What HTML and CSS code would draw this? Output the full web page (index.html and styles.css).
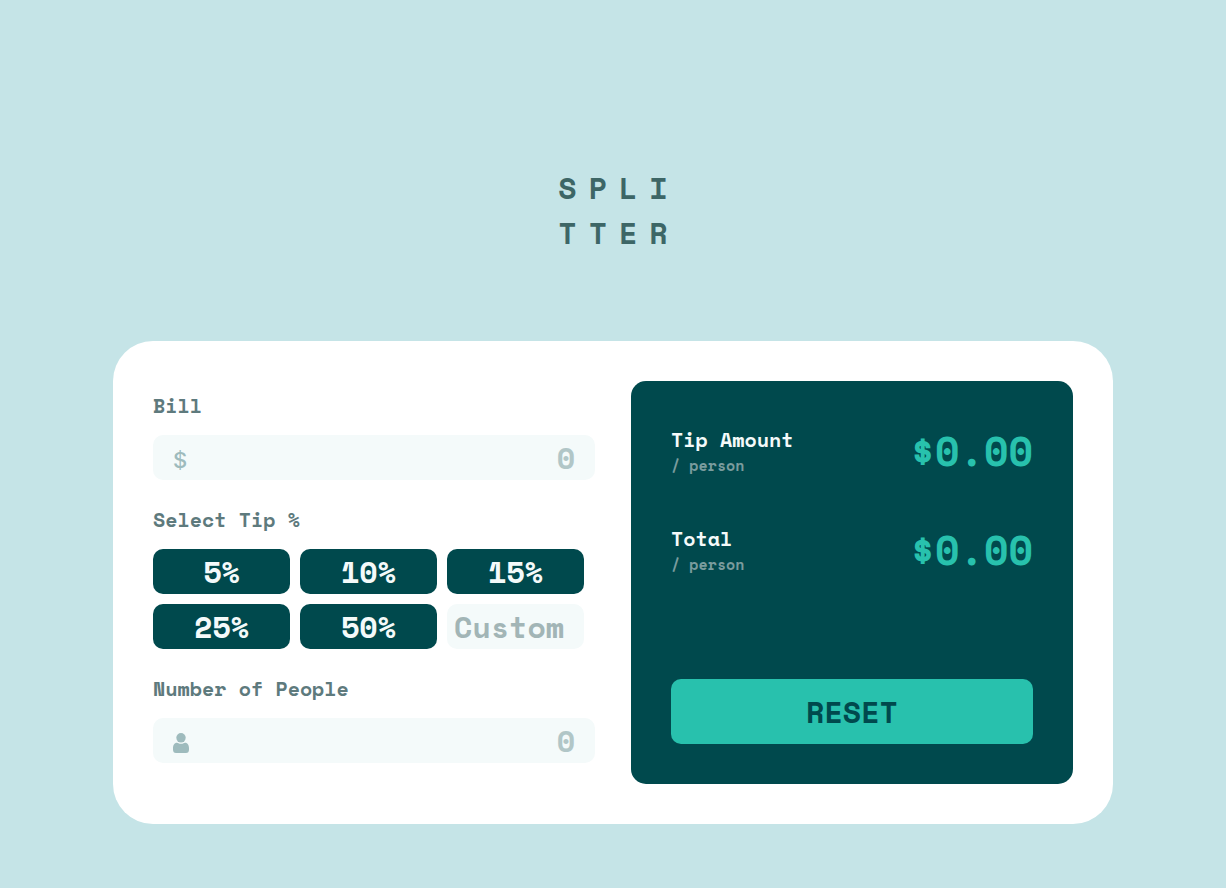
FILE: index.html
```html
<!DOCTYPE html>
<html lang="en">
<head>
  <meta charset="utf-8">
  <meta name="viewport" content="width=device-width, initial-scale=1">
  <title>Splitter</title>
  <link rel="stylesheet" href="styles.css">
</head>
<body>
  <h1 class="logo">SPLI<br>TTER</h1>
  <main class="card">
    <form class="entry">
      <label class="label" for="bill">Bill</label>
      <div class="field">
        <span class="dollar" aria-hidden="true">$</span>
        <input class="number" id="bill" type="text" inputmode="decimal" placeholder="0">
      </div>
      <p class="label" id="tip-label">Select Tip %</p>
      <div class="tips" role="group" aria-labelledby="tip-label">
        <button class="tip" type="button">5%</button>
        <button class="tip" type="button">10%</button>
        <button class="tip" type="button">15%</button>
        <button class="tip" type="button">25%</button>
        <button class="tip" type="button">50%</button>
        <input class="custom" type="text" inputmode="decimal" placeholder="Custom" aria-label="Custom tip">
      </div>
      <label class="label" for="people">Number of People</label>
      <div class="field">
        <svg class="person" viewBox="0 0 16 20" aria-hidden="true">
          <ellipse cx="8" cy="4.800" rx="4.700" ry="4.800"/>
          <path d="M4 9.700C5 9.700 5.700 10.800 8 10.800S11 9.700 12 9.700C14.800 9.700 16 12.300 16 15.300V16.500C16 19 15 20 13 20H3C1 20 0 19 0 16.500V15.300C0 12.300 1.200 9.700 4 9.700Z"/>
        </svg>
        <input class="number" id="people" type="text" inputmode="numeric" placeholder="0">
      </div>
    </form>
    <section class="summary">
      <div class="result">
        <div>
          <h2 class="result-name">Tip Amount</h2>
          <p class="unit">/ person</p>
        </div>
        <output class="amount">$0.00</output>
      </div>
      <div class="result">
        <div>
          <h2 class="result-name">Total</h2>
          <p class="unit">/ person</p>
        </div>
        <output class="amount">$0.00</output>
      </div>
      <button class="reset" type="button">RESET</button>
    </section>
  </main>
</body>
</html>
```

FILE: styles.css
```css
* {
  box-sizing: border-box;
  margin: 0;
}

body,
button,
input {
  font-family: "Space Mono", "DejaVu Sans Mono", "Liberation Mono", monospace;
  font-weight: 700;
}

body {
  min-height: 100vh;
  padding: 64px 20px;
  display: flex;
  flex-direction: column;
  align-items: center;
  justify-content: flex-end;
  gap: 86px;
  background: #c5e4e7;
  color: #5e7a7d;
}

.logo {
  padding-left: 12px;
  font-size: 30px;
  line-height: 45px;
  letter-spacing: 12px;
  color: #3d6666;
}

.card {
  width: 100%;
  max-width: 1000px;
  padding: 40px;
  display: grid;
  grid-template-columns: 1fr 1fr;
  gap: 36px;
  background: #fff;
  border-radius: 40px;
}

.entry {
  padding: 10px 0 21px;
}

.label {
  display: block;
  margin-bottom: 14px;
  font-size: 20px;
  line-height: 30px;
}

.field {
  height: 45px;
  margin-bottom: 25px;
  padding: 0 20px;
  display: flex;
  align-items: center;
  background: #f4fafa;
  border-radius: 10px;
}

.field:last-child {
  margin-bottom: 0;
}

.dollar {
  margin-top: 4px;
  font-family: Inter, "Liberation Sans", sans-serif;
  font-size: 22px;
  font-weight: 500;
  line-height: 30px;
  color: #9ebbbd;
}

.person {
  flex: none;
  width: 16px;
  height: 20px;
  margin-top: 4px;
  fill: #9ebbbd;
}

.number {
  flex: 1;
  min-width: 0;
  padding: 0;
  border: 0;
  background: none;
  font-size: 30px;
  text-align: right;
  color: #00494d;
}

.number::placeholder {
  color: #b1c6c7;
}

.tips {
  max-width: 431px;
  margin-bottom: 25px;
  display: grid;
  grid-template-columns: repeat(3, 1fr);
  grid-auto-rows: 45px;
  gap: 10px;
}

.tip,
.custom {
  min-width: 0;
  padding: 0 7px;
  border: 0;
  border-radius: 10px;
  font-size: 30px;
}

.tip {
  background: #00494d;
  color: #f4fafa;
}

.custom {
  background: #f4fafa;
  color: #00494d;
}

.custom::placeholder {
  color: #a2b5b6;
}

.summary {
  padding: 44px 40px 40px;
  display: flex;
  flex-direction: column;
  gap: 47px;
  background: #00494d;
  border-radius: 15px;
}

.result {
  display: flex;
  align-items: flex-start;
  justify-content: space-between;
}

.result-name {
  font-size: 20px;
  line-height: 30px;
  color: #f4fafa;
}

.unit {
  font-size: 15px;
  line-height: 20px;
  color: #7a9c9e;
}

.amount {
  font-size: 40px;
  line-height: 52px;
  color: #28c1ad;
}

.reset {
  height: 65px;
  margin-top: auto;
  border: 0;
  border-radius: 10px;
  background: #28c1ad;
  color: #00494d;
  font-size: 30px;
}

@media (max-width: 900px) {
  .card {
    grid-template-columns: 1fr;
  }
}
```
